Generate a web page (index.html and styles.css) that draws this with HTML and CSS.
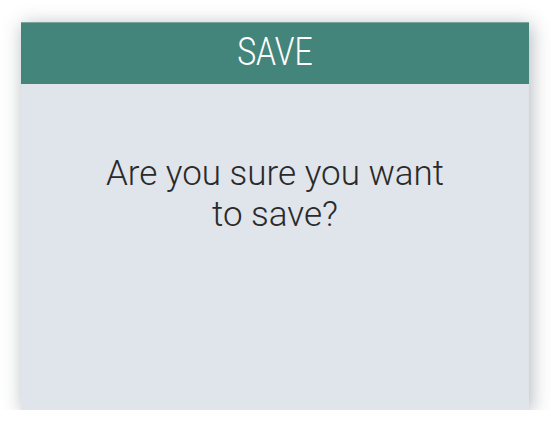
FILE: index.html
```html
<!DOCTYPE html>
<html>
<head>
<meta charset="utf-8">
<link rel="stylesheet" href="styles.css">
</head>
<body>
<div class="dialog">
  <div class="dialog-header"><span class="title">SAVE</span></div>
  <div class="dialog-body">
    <p class="message">Are you sure you want<br>to save?</p>
  </div>
</div>
</body>
</html>
```
FILE: styles.css
```css
html, body {
  margin: 0;
  padding: 0;
  background: #ffffff;
}
body {
  padding: 22px 0 0 21px;
  font-family: Roboto, "Liberation Sans", sans-serif;
}
.dialog {
  width: 508px;
  height: 388px;
  background: #e0e4eb;
  box-shadow: 2px 3px 18px rgba(50, 60, 80, 0.38);
  display: flex;
  flex-direction: column;
}
.dialog-header {
  height: 62px;
  background: #43857a;
  color: #ffffff;
  display: flex;
  align-items: center;
  justify-content: center;
  border-top: 1px solid #7aa69e;
  box-sizing: border-box;
  padding-bottom: 3px;
}
.title {
  display: inline-block;
  font-weight: 300;
  font-size: 38px;
  line-height: 44px;
  transform: scaleX(0.84);
}
.dialog-body {
  flex: 1;
  padding-top: 69px;
}
.message {
  margin: 0;
  text-align: center;
  font-size: 35px;
  font-weight: 300;
  line-height: 41px;
  color: #2a2a2a;
}
```
